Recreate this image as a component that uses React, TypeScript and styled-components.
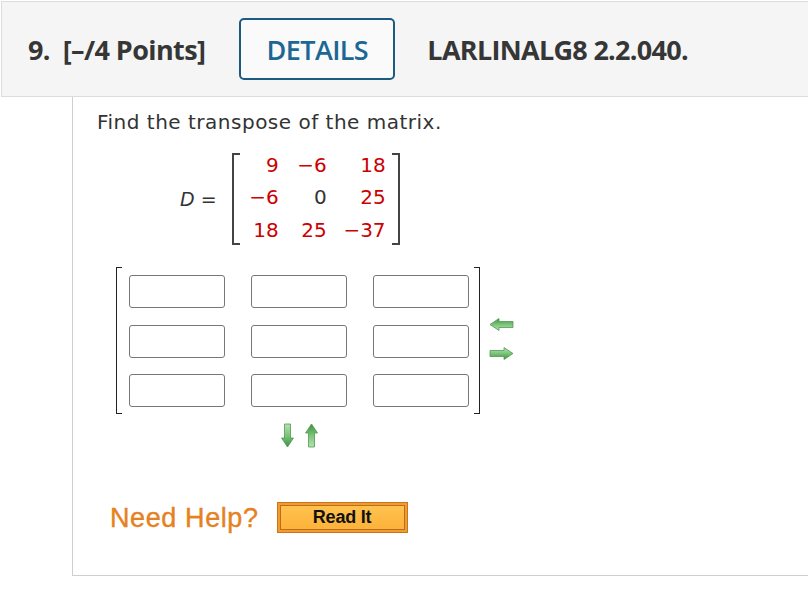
import styled, { createGlobalStyle } from 'styled-components';

const Global = createGlobalStyle`
    html, body {
        margin: 0;
        padding: 0;
        background: #fff;
        overflow: hidden;
    }
`;

const Page = styled.div`
    width: 808px;
    height: 598px;
    padding-top: 1px;
    box-sizing: border-box;
`;

const Header = styled.div`
    display: flex;
    align-items: center;
    height: 96px;
    margin-left: 1px;
    width: 820px;
    border: 1px solid #dcdcdc;
    background: #f5f5f5;
    padding-left: 26px;
    box-sizing: border-box;
    font-family: 'Open Sans', sans-serif;
    font-weight: 700;
    font-size: 27px;
    color: #363636;
`;

const Points = styled.span`
    letter-spacing: -0.6px;
    white-space: pre;
`;

const DetailsButton = styled.div`
    margin-left: 34px;
    width: 156px;
    height: 62px;
    box-sizing: border-box;
    border: 2px solid #1c5b80;
    border-radius: 5px;
    display: flex;
    align-items: center;
    justify-content: center;
    color: #1d6794;
    font-weight: 600;
    letter-spacing: -0.6px;
    background: #fafafa;
`;

const Code = styled.span`
    margin-left: 32px;
    letter-spacing: -0.7px;
`;

const Body = styled.div`
    margin-left: 72px;
    height: 479px;
    border-left: 1px solid #cfcfcf;
    border-bottom: 1px solid #cfcfcf;
    padding: 12px 0 0 24px;
    box-sizing: border-box;
    font-family: 'DejaVu Sans', Verdana, sans-serif;
    color: #333;
`;

const Prompt = styled.div`
    font-size: 20px;
    line-height: 26px;
    letter-spacing: 0.5px;
`;

const GivenRow = styled.div`
    display: flex;
    align-items: center;
    margin: 18px 0 0 83px;
`;

const Label = styled.span`
    font-size: 19px;
    margin-right: 15px;
    color: #333;
`;

const Bracketed = styled.div<{ $weight: number; $color: string; $tick: number }>`
    position: relative;
    display: flex;
    align-items: stretch;

    &::before,
    &::after {
        content: '';
        position: absolute;
        top: 0;
        bottom: 0;
        width: ${(p) => p.$tick}px;
        border: ${(p) => p.$weight}px solid ${(p) => p.$color};
    }
    &::before {
        left: 0;
        border-right: none;
    }
    &::after {
        right: 0;
        border-left: none;
    }
`;

const NumGrid = styled.div`
    display: grid;
    grid-template-columns: 41px 48px 59px;
    grid-auto-rows: 32.5px;
    box-sizing: border-box;
    height: 92px;
    padding: 0 14px 4px 6px;
    font-size: 20px;
    color: #c00;
    align-items: center;
    align-content: center;
`;

const Num = styled.span<{ $zero?: boolean }>`
    text-align: right;
    color: ${(p) => (p.$zero ? '#333' : 'inherit')};
`;

const AnswerArea = styled.div`
    display: flex;
    align-items: center;
    margin: 22px 0 0 19px;
`;

const InputGrid = styled.div`
    display: grid;
    grid-template-columns: repeat(3, 96px);
    grid-template-rows: repeat(3, 33px);
    column-gap: 26px;
    row-gap: 16.5px;
    padding: 8px 11px 7px 13px;
`;

const Cell = styled.div`
    border: 1px solid #777;
    border-radius: 3px;
    background: #fff;
`;

const SideArrows = styled.div`
    display: flex;
    flex-direction: column;
    gap: 16px;
    margin-left: 9px;
    margin-top: -3px;
`;

const BottomArrows = styled.div`
    display: flex;
    gap: 11px;
    margin: 9px 0 0 184px;
`;

const HelpRow = styled.div`
    display: flex;
    align-items: center;
    margin: 54px 0 0 13px;
`;

const NeedHelp = styled.span`
    font-family: 'Liberation Sans', Arial, sans-serif;
    font-size: 27px;
    line-height: 30px;
    color: #e6811f;
    letter-spacing: 0.6px;
    -webkit-text-stroke: 0.4px #e6811f;
`;

const ReadIt = styled.div`
    margin-left: 18px;
    width: 131px;
    height: 31px;
    box-sizing: border-box;
    border: 1px solid #c7761d;
    background: #f59a2c;
    padding: 2px;
    display: flex;
`;

const ReadItInner = styled.div`
    flex: 1;
    border: 1px solid #b86e1f;
    background: linear-gradient(#ffc24f, #fdb23a);
    display: flex;
    align-items: center;
    justify-content: center;
    font-family: 'Liberation Sans', Arial, sans-serif;
    font-weight: 700;
    font-size: 18px;
    color: #111;
    letter-spacing: -0.2px;
`;

type Dir = 'left' | 'right' | 'up' | 'down';

const Arrow = ({ dir }: { dir: Dir }) => {
    const flat = dir === 'left' || dir === 'right';
    const w = flat ? 25 : 13;
    const h = flat ? 13 : 25;
    const transform = {
        right: '',
        left: 'rotate(180 12.5 6.5)',
        down: 'translate(13 0) rotate(90)',
        up: 'translate(0 25) rotate(-90)',
    }[dir];
    const id = `g-${dir}`;
    return (
        <svg width={w} height={h} viewBox={`0 0 ${w} ${h}`}>
            <defs>
                <linearGradient id={id} x1="0" y1="0" x2={flat ? '0' : '1'} y2={flat ? '1' : '0'}>
                    <stop offset="0" stopColor="#b5e2b0" />
                    <stop offset="0.5" stopColor="#7cc47a" />
                    <stop offset="1" stopColor="#3f8f43" />
                </linearGradient>
            </defs>
            <path
                transform={transform}
                d="M1 3.5 H15 V0.5 L24 6.5 L15 12.5 V9.5 H1 Z"
                fill={`url(#${id})`}
                stroke="#4f9a52"
                strokeWidth="0.8"
            />
        </svg>
    );
};

const given = [9, -6, 18, -6, 0, 25, 18, 25, -37];

const fmt = (n: number) => (n < 0 ? `\u2212${-n}` : `${n}`);

const App = () => {
    return (
        <Page>
            <Global />
            <Header>
                <Points>{'9.  [\u2013/4 Points]'}</Points>
                <DetailsButton>DETAILS</DetailsButton>
                <Code>LARLINALG8 2.2.040.</Code>
            </Header>
            <Body>
                <Prompt>Find the transpose of the matrix.</Prompt>
                <GivenRow>
                    <Label>
                        <i>D</i> =
                    </Label>
                    <Bracketed $weight={2} $color="#444" $tick={6}>
                        <NumGrid>
                            {given.map((n, i) => (
                                <Num key={i} $zero={n === 0}>
                                    {fmt(n)}
                                </Num>
                            ))}
                        </NumGrid>
                    </Bracketed>
                </GivenRow>
                <AnswerArea>
                    <Bracketed $weight={1} $color="#222" $tick={5}>
                        <InputGrid>
                            {Array.from({ length: 9 }).map((_, i) => (
                                <Cell key={i} />
                            ))}
                        </InputGrid>
                    </Bracketed>
                    <SideArrows>
                        <Arrow dir="left" />
                        <Arrow dir="right" />
                    </SideArrows>
                </AnswerArea>
                <BottomArrows>
                    <Arrow dir="down" />
                    <Arrow dir="up" />
                </BottomArrows>
                <HelpRow>
                    <NeedHelp>Need Help?</NeedHelp>
                    <ReadIt>
                        <ReadItInner>Read It</ReadItInner>
                    </ReadIt>
                </HelpRow>
            </Body>
        </Page>
    );
};

export default App;
